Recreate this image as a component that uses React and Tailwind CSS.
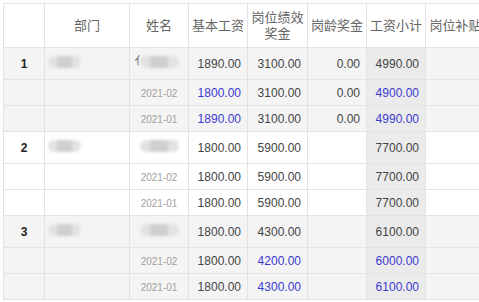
import React from "react";

const BLUE = "text-[#3a3ad0]";

const groups = [
  {
    idx: 1,
    shade: true,
    nameMark: true,
    rows: [
      { date: null, base: "1890.00", perf: "3100.00", age: "0.00", total: "4990.00" },
      { date: "2021-02", base: "1800.00", baseBlue: true, perf: "3100.00", age: "0.00", total: "4900.00", totalBlue: true },
      { date: "2021-01", base: "1890.00", baseBlue: true, perf: "3100.00", age: "0.00", total: "4990.00", totalBlue: true },
    ],
  },
  {
    idx: 2,
    shade: false,
    rows: [
      { date: null, base: "1800.00", perf: "5900.00", age: "", total: "7700.00" },
      { date: "2021-02", base: "1800.00", perf: "5900.00", age: "", total: "7700.00" },
      { date: "2021-01", base: "1800.00", perf: "5900.00", age: "", total: "7700.00" },
    ],
  },
  {
    idx: 3,
    shade: true,
    rows: [
      { date: null, base: "1800.00", perf: "4300.00", age: "", total: "6100.00" },
      { date: "2021-02", base: "1800.00", perf: "4200.00", perfBlue: true, age: "", total: "6000.00", totalBlue: true },
      { date: "2021-01", base: "1800.00", perf: "4300.00", perfBlue: true, age: "", total: "6100.00", totalBlue: true },
    ],
  },
];

function Blob({ w, mark }) {
  return (
    <div className="relative inline-flex items-center h-[14px]" style={{ width: w }}>
      {mark && <span className="absolute -left-[5px] top-[1px] text-[11px] leading-none text-[#666]">亻</span>}
      <div className="w-full h-[12px] rounded-full bg-[#e2e2e2] blur-[1.5px] flex justify-center">
        <div className="w-[45%] h-full bg-[#cfcfcf]" />
      </div>
    </div>
  );
}

const td = "border border-[#e3e3e3] px-[6px] text-right";

export default function App() {
  return (
    <div className="w-[479px] h-[302px] overflow-hidden bg-white pt-[3px] pl-[3px]" style={{ fontFamily: '"Liberation Sans", "Noto Sans CJK SC", sans-serif' }}>
      <table className="table-fixed border-collapse w-[542px] text-[12px] text-[#444]">
        <colgroup>
          <col className="w-[41px]" />
          <col className="w-[85px]" />
          <col className="w-[59px]" />
          <col className="w-[59px]" />
          <col className="w-[60px]" />
          <col className="w-[59px]" />
          <col className="w-[59px]" />
          <col className="w-[60px]" />
          <col className="w-[60px]" />
        </colgroup>
        <thead>
          <tr className="h-[44px] text-[13px] text-[#666] leading-[16px] bg-white">
            <th className="border border-[#e3e3e3] font-normal"></th>
            <th className="border border-[#e3e3e3] font-normal">部门</th>
            <th className="border border-[#e3e3e3] font-normal">姓名</th>
            <th className="border border-[#e3e3e3] font-normal">基本工资</th>
            <th className="border border-[#e3e3e3] font-normal px-[3px]">岗位绩效奖金</th>
            <th className="border border-[#e3e3e3] font-normal">岗龄奖金</th>
            <th className="border border-[#e3e3e3] font-normal">工资小计</th>
            <th className="border border-[#e3e3e3] font-normal whitespace-nowrap">岗位补贴</th>
            <th className="border border-[#e3e3e3] font-normal"></th>
          </tr>
        </thead>
        <tbody>
          {groups.map((g) =>
            g.rows.map((r, i) => (
              <tr key={g.idx + "-" + i} className={`${i === 0 ? "h-[32px]" : "h-[26px]"} ${g.shade ? "bg-[#f4f4f4]" : "bg-white"}`}>
                <td className="border border-[#e3e3e3] text-center font-bold text-[#222]">{i === 0 ? g.idx : ""}</td>
                <td className="border border-[#e3e3e3] pl-[3px]">{i === 0 && <Blob w={33} />}</td>
                <td className="border border-[#e3e3e3] text-center">
                  {i === 0 ? <Blob w={39} mark={g.nameMark} /> : <span className="text-[10px] text-[#a0a0a0]">{r.date}</span>}
                </td>
                <td className={`${td} ${r.baseBlue ? BLUE : ""}`}>{r.base}</td>
                <td className={`${td} ${r.perfBlue ? BLUE : ""}`}>{r.perf}</td>
                <td className={td}>{r.age}</td>
                <td className={`${td} bg-[#ebebeb] ${r.totalBlue ? BLUE : ""}`}>{r.total}</td>
                <td className={td}></td>
                <td className={td}></td>
              </tr>
            ))
          )}
        </tbody>
      </table>
    </div>
  );
}
